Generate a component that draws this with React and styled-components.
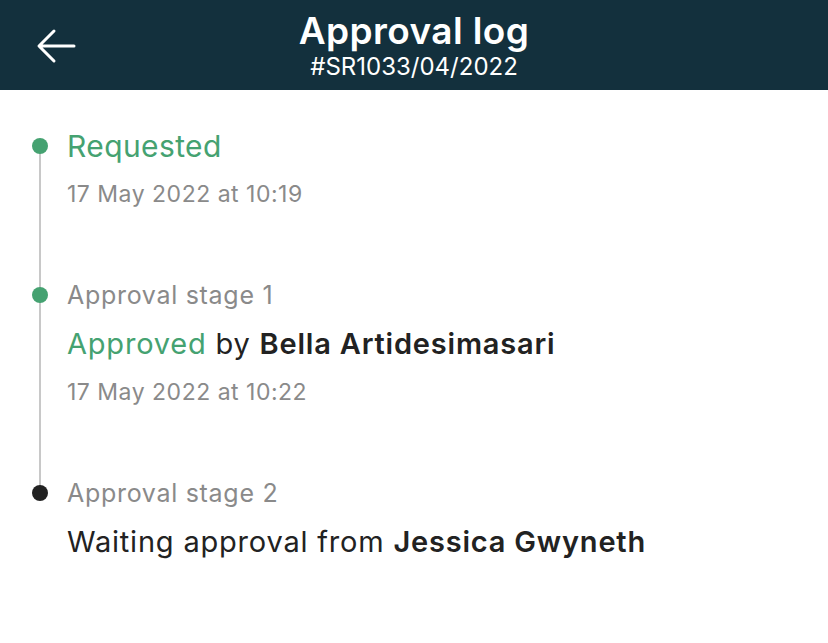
import React from 'react';
import styled, { createGlobalStyle } from 'styled-components';

const GlobalStyle = createGlobalStyle`
  html, body {
    margin: 0;
    padding: 0;
    background: #ffffff;
  }
  body {
    font-family: Inter, "Noto Sans", "Liberation Sans", sans-serif;
    -webkit-font-smoothing: antialiased;
  }
`;

const ITEM_GAP = 70;

const Page = styled.div`
  width: 828px;
  min-height: 643px;
  background: #ffffff;
`;

const Header = styled.header`
  position: relative;
  height: 90px;
  box-sizing: border-box;
  padding-top: 11px;
  background-color: #13303d;
  display: flex;
  flex-direction: column;
  align-items: center;
  gap: 2px;
  color: #ffffff;
`;

const BackButton = styled.button`
  position: absolute;
  left: 36px;
  top: 28px;
  width: 40px;
  height: 36px;
  padding: 0;
  border: none;
  background: transparent;
  cursor: pointer;
  display: flex;
  align-items: center;
  justify-content: center;
`;

const Title = styled.h1`
  margin: 0;
  font-size: 37px;
  font-weight: 600;
  line-height: 40px;
  letter-spacing: 0.4px;
`;

const Subtitle = styled.div`
  font-size: 24px;
  font-weight: 400;
  line-height: 28px;
`;

const Timeline = styled.ol`
  list-style: none;
  margin: 0;
  padding: 36px 0 0 67px;
  display: flex;
  flex-direction: column;
  gap: ${ITEM_GAP}px;
`;

const Item = styled.li`
  position: relative;
  display: flex;
  flex-direction: column;
  gap: 13px;

  &::before {
    content: '';
    position: absolute;
    left: -35px;
    top: ${p => p.$dotTop}px;
    width: 16px;
    height: 16px;
    border-radius: 50%;
    background: ${p => (p.$done ? '#45a271' : '#222222')};
    z-index: 1;
  }

  &::after {
    content: '';
    display: ${p => (p.$last ? 'none' : 'block')};
    position: absolute;
    left: -28px;
    top: ${p => p.$dotTop + 8}px;
    bottom: -${p => ITEM_GAP + p.$nextDot + 8}px;
    width: 2px;
    background: #c8c8c8;
  }
`;

const Status = styled.div`
  font-size: 30px;
  line-height: 40px;
  letter-spacing: 0.4px;
  color: #45a271;
`;

const Stage = styled.div`
  font-size: 25px;
  line-height: 32px;
  letter-spacing: 0.7px;
  color: #8a8a8a;
`;

const Detail = styled.div`
  font-size: 29px;
  line-height: 40px;
  letter-spacing: 0.8px;
  color: #222222;
`;

const Accent = styled.span`
  color: #45a271;
`;

const Name = styled.strong`
  font-weight: 600;
`;

const Stamp = styled.div`
  font-size: 23px;
  line-height: 30px;
  letter-spacing: 0.5px;
  color: #8a8a8a;
`;

const BackArrow = () => (
  <svg width="40" height="36" viewBox="0 0 40 36" fill="none">
    <path
      d="M38 18H4M18 3L3 18l15 15"
      stroke="#ffffff"
      strokeWidth="3"
      strokeLinecap="round"
      strokeLinejoin="round"
    />
  </svg>
);

const App = () => (
  <Page>
    <GlobalStyle />
    <Header>
      <BackButton aria-label="Back">
        <BackArrow />
      </BackButton>
      <Title>Approval log</Title>
      <Subtitle>#SR1033/04/2022</Subtitle>
    </Header>

    <Timeline>
      <Item $done $dotTop={12} $nextDot={8}>
        <Status>Requested</Status>
        <Stamp>17 May 2022 at 10:19</Stamp>
      </Item>

      <Item $done $dotTop={8} $nextDot={8}>
        <Stage>Approval stage 1</Stage>
        <Detail>
          <Accent>Approved</Accent> by <Name>Bella Artidesimasari</Name>
        </Detail>
        <Stamp>17 May 2022 at 10:22</Stamp>
      </Item>

      <Item $last $dotTop={8}>
        <Stage>Approval stage 2</Stage>
        <Detail>
          Waiting approval from <Name>Jessica Gwyneth</Name>
        </Detail>
      </Item>
    </Timeline>
  </Page>
);

export default App;
